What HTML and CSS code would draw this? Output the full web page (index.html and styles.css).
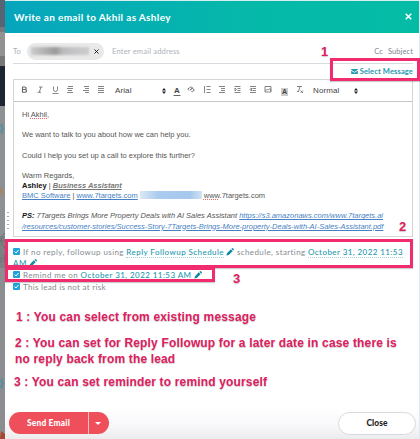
FILE: index.html
```html
<!DOCTYPE html>
<html lang="en">
<head>
<meta charset="utf-8">
<title>Write an email</title>
<link rel="stylesheet" href="styles.css">
</head>
<body>
<svg width="0" height="0" class="defs">
  <symbol id="pencil" viewBox="0 0 10 10"><path d="M.5 9.5l.7-3L6 1.7l2.3 2.3-4.8 4.8zM6.7 1L7.6.2q.5-.3 1 .1l1.1 1.1q.4.5 0 1L9 3.300z"/></symbol>
  <symbol id="sort" viewBox="0 0 4 6"><path d="M0 2.400L2 0l2 2.400zM0 3.600h4L2 6z"/></symbol>
</svg>
<div class="screen">
  <aside class="backdrop">
    <i class="b1"></i><i class="b2"></i><i class="b3"></i><i class="b4"></i><i class="b5"></i><i class="b6"></i><i class="b7"></i><i class="b8"></i>
    <svg class="marks" viewBox="0 0 5 439"><path d="M0 125l4 4M0 132l4-4M2 123v11M0 380l4 4M0 387l4-4M2 378v11" stroke="#458da3" fill="none"/><path d="M1 188v7h2M0 191h3" stroke="#b67f4a" fill="none"/><path d="M5 233q-4 2-4 7t4 8M0 241h5M4.500 255v7M0 258q2-1 2 1.500T0 262" stroke="#666" stroke-width=".7" fill="none"/><path d="M1 431l4 3v5H0z" fill="#a9462f"/></svg>
  </aside>
  <main class="modal">
    <header class="head"><h1>Write an email to Akhil as Ashley</h1><svg class="x" viewBox="0 0 7 7"><path d="M.7.7l5.600 5.600M6.300.7L.7 6.300"/></svg></header>
    <section class="to">
      <span class="lab">To</span>
      <span class="chip"><span class="smudge"></span><svg viewBox="0 0 5 5"><path d="M.5.5l4 4M4.500.5l-4 4"/></svg></span>
      <span class="ph">Enter email address</span>
      <span class="cc">Cc</span><span class="subj">Subject</span>
    </section>
    <div class="select"><svg viewBox="0 0 8 6"><path d="M0 0h8v1L4 3.500 0 1zM0 2l4 2.500L8 2v4H0z"/></svg><span>Select Message</span></div>
    <section class="editor">
      <div class="bar">
        <svg class="tools" viewBox="0 0 400 21" fill="none" stroke="#666" stroke-width=".8">
          <path d="M8.500 7h2.200q1.500 0 1.500 1.200T10.700 9.500H8.500zM8.500 9.500H11q1.600 0 1.600 1.300T11 12.200H8.500z" stroke-width="1.100"/>
          <path d="M25 7h3.500M23.500 12.300H27M27 7l-1.700 5.300"/>
          <path d="M39.500 6.500v3q0 2 2 2t2-2v-3M38.500 13.500h6"/>
          <path d="M54 6.500h5M53 8.500h6M54 10.500h4M53 12.500h6M70 6.500h5M71 8.500h4M69 10.500h6M71 12.500h4M84 6.500h6M84 8.500h6M84 10.500h6M84 12.500h6"/>
          <path d="M159.500 15.500h7M175 8.500l1.500-1.500q1-.5 1.500.5t-1 2l-1 .5M177 9q1.500-1.500 2.500 0t0 2-2 .5M174.500 8q-1 1.500.5 2.500" stroke-width="1"/>
          <path d="M190.500 6v7M192.500 6.500h4M192.500 9.500h4M192.500 12.500h4M205 6.500h6M207 8.500h4M207 10.500h4M205 12.500h6M220.500 6.500h6M223.500 8.500h3M223.500 10.500h3M220.500 12.500h6M221 8v3l1.500-1.500zM236 6.500h6M238.500 8.500h3.500M238.500 10.500h3.500M236 12.500h6M237.500 8v3L236 9.500zM251 6.500h6V12h-6zM251.500 11l2-2 1 1 1.500-1.500 1 2.500"/>
          <path d="M283 6.500h5M286 6.500l-1.500 5M283 11.500h2M286.500 10.500l2.500 2.500M289 10.500L286.500 13"/>
        </svg>
        <span class="font">Arial</span><svg class="sort"><use href="#sort"/></svg><b class="ca">A</b><b class="ba">A</b><span class="norm">Normal</span><svg class="sort"><use href="#sort"/></svg>
      </div>
      <div class="text">
        <p>Hi <u class="sp">Akhil</u>,</p><p></p>
        <p>We want to talk to you about how we can help you.</p><p></p>
        <p>Could I help you set up a call to explore this further?</p><p></p>
        <p>Warm Regards,</p>
        <p><b>Ashley</b> | <em class="role">Business Assistant</em></p>
        <p><a>BMC Software</a> | <a>www.7targets.com</a><span class="blur"></span><span><u class="sp">www</u>.7targets.com</span></p><p></p>
        <p><em><b>PS:</b> 7Targets Brings More Property Deals with AI Sales Assistant <a>https://s3.amazonaws.com/www.7targets.ai</a></em></p>
        <p><em><a>/resources/customer-stories/Success-Story-7Targets-Brings-More-property-Deals-with-AI-Sales-Assistant.pdf</a></em></p>
      </div>
    </section>
    <section class="opts">
      <div class="opt"><i class="ck"><svg viewBox="0 0 7 7"><path d="M1.500 3.500L3 5l2.500-3"/></svg></i><span>If no reply, followup using <a>Reply Followup Schedule</a> <svg class="pen"><use href="#pencil"/></svg> schedule, starting <a>October 31, 2022 11:53</a></span></div>
      <div class="opt"><span><a>AM</a> <svg class="pen"><use href="#pencil"/></svg></span></div>
      <div class="opt"><i class="ck"><svg viewBox="0 0 7 7"><path d="M1.500 3.500L3 5l2.500-3"/></svg></i><span>Remind me on <a>October 31, 2022 11:53 AM</a> <svg class="pen"><use href="#pencil"/></svg></span></div>
      <div class="opt"><i class="ck"><svg viewBox="0 0 7 7"><path d="M1.500 3.500L3 5l2.500-3"/></svg></i><span class="risk">This lead is not at risk</span></div>
    </section>
    <section class="notes">
      <p class="n1">1 : You can select from existing message</p>
      <p class="n2">2 : You can set for Reply Followup for a later date in case there is</p>
      <p class="n3">no reply back from the lead</p>
      <p class="n4">3 : You can set reminder to remind yourself</p>
    </section>
    <footer class="foot">
      <div class="send"><span>Send Email</span><i><svg viewBox="0 0 6 3"><path d="M0 0h6L3 3z"/></svg></i></div>
      <div class="close">Close</div>
    </footer>
  </main>
  <div class="box k1"></div><div class="box k2"></div><div class="box k3"></div>
  <b class="num m1">1</b><b class="num m2">2</b><b class="num m3">3</b>
  <i class="grip"></i>
</div>
</body>
</html>
```
FILE: styles.css
```css
* { box-sizing: border-box; }
body { margin: 0; width: 420px; height: 439px; overflow: hidden; font-family: Lato, sans-serif; color: #858a91; }
h1, p { margin: 0; }
svg { display: block; flex: none; }
.defs { position: absolute; }
.screen { position: relative; display: flex; width: 420px; height: 439px; background: #d8eeee; }
.backdrop { position: relative; width: 5px; height: 439px; display: flex; flex-direction: column; background: #8e9194; }
.backdrop i { display: block; }
.b1 { height: 27px; background: #586474; }
.b2 { height: 5px; background: #77797e; }
.b3 { height: 24px; background: #929292; }
.b4 { height: 10px; background: #777; }
.b5 { height: 40px; background: #1d2534; }
.b6 { height: 130px; background: #8e9194; }
.b7 { height: 32px; background: #7e8183; }
.b8 { height: 171px; background: #8b8d90; }
.marks { position: absolute; left: 0; top: 0; width: 5px; height: 439px; }
.modal { width: 414px; height: 438px; margin-top: 1px; background: #fff; display: flex; flex-direction: column; }
.head { height: 32px; flex: none; display: flex; align-items: center; justify-content: space-between; padding: 0 7px 0 9px; background: linear-gradient(90deg, #06a5bd, #05b9a9 60%, #04bca6); color: #fff; }
h1 { font-size: 10px; font-weight: 700; letter-spacing: .34px; white-space: nowrap; }
.x { width: 7px; height: 7px; margin-top: -1px; fill: none; stroke: #fff; stroke-width: 1.5; }
.to { height: 31px; flex: none; margin: 0 6px 0 8px; padding: 6px 0 0; border-bottom: 1px solid #d9dbe0; display: flex; align-items: center; font-size: 7.5px; white-space: nowrap; color: #aeb2ba; }
.lab { width: 14px; }
.chip { width: 77px; height: 17px; border-radius: 9px; background: #e9e9ea; display: flex; align-items: center; justify-content: space-between; padding: 0 5px 0 4px; margin-right: 8px; }
.smudge { width: 58px; height: 8px; background: linear-gradient(90deg, #cbcbcd, #aaa 30%, #999 42%, #bbb 55%, #c5c5c7 75%, #ccc); filter: blur(1px); }
.chip svg { width: 5px; height: 5px; stroke: #222; stroke-width: 1; }
.ph { flex: 1; letter-spacing: .2px; }
.cc { color: #81868f; margin-right: 5px; }
.subj { color: #81868f; letter-spacing: .1px; }
.select { height: 15px; flex: none; display: flex; justify-content: flex-end; align-items: center; gap: 2px; padding-right: 6px; color: #2599af; font-size: 7.5px; font-weight: 700; letter-spacing: .13px; }
.select svg { width: 7px; height: 5px; fill: #2599af; }
.editor { height: 158px; flex: none; margin: 0 6px 0 8px; border: 1px solid #d5d5d8; font-family: "Liberation Sans", sans-serif; color: #555; }
.bar { position: relative; height: 22px; border-bottom: 1px solid #c5c5c8; display: flex; align-items: center; font-size: 8px; color: #444; padding-left: 101px; }
.tools { position: absolute; left: 0; top: 0; width: 400px; height: 21px; }
.font { width: 47px; letter-spacing: .1px; }
.sort { width: 4px; height: 6px; fill: #222; }
.ca { width: 7px; margin-left: 8px; font-size: 8px; }
.ba { width: 7px; height: 8px; line-height: 8px; margin-left: 100px; margin-top: 3px; background: #ccc; font-size: 7px; text-align: center; }
.norm { margin-left: 25px; width: 41px; letter-spacing: .1px; }
.text { padding: 8px 0 0 8px; font-size: 7.5px; line-height: 10.15px; }
.text p { height: 10.15px; white-space: nowrap; }
a { color: #2599af; }
.text a { color: #477fc3; text-decoration: underline; }
.text b { color: #111; }
.sp { text-decoration: underline dotted #e66; }
.role { font-weight: 700; color: #777; text-decoration: underline; }
.blur { display: inline-block; width: 62px; height: 8px; margin: 0 2px; vertical-align: -1px; background: linear-gradient(90deg, #dce8f5, #a9cbee 30%, #a5c8ed 80%, #d2e2f3); }
.opts { height: 57px; flex: none; padding: 9px 0 0 8px; font-size: 8px; }
.opt { height: 11.6px; display: flex; align-items: center; gap: 3px; white-space: nowrap; letter-spacing: .4px; }
.opt a { border-bottom: 1px dotted #a5d4dd; font-weight: 500; letter-spacing: .43px; }
.risk { letter-spacing: .3px; }
.ck { width: 7px; height: 7px; border-radius: 1px; background: #20a2dd; }
.ck svg { width: 7px; height: 7px; fill: none; stroke: #fff; }
.pen { display: inline-block; width: 8px; height: 8px; fill: #118ba1; vertical-align: -1px; }
.notes { height: 114px; flex: none; padding: 15px 0 0 9px; font-family: "Liberation Sans", sans-serif; font-weight: 700; font-size: 12px; letter-spacing: .16px; color: #df2060; text-shadow: 0 1px 1px #ccc; }
.notes p { height: 16px; line-height: 16px; white-space: nowrap; }
.notes .n1 { margin: 0 0 10px 2px; }
.n2, .n3 { margin-left: 1px; }
.notes .n4 { margin-top: 7px; }
.foot { flex: 1; padding: 4px 3px 0 4px; display: flex; justify-content: space-between; background: linear-gradient(#fff, #f9f9fb 50%, #ececee); font-size: 8.4px; font-weight: 900; }
.send { width: 100px; height: 22px; border-radius: 11px; background: #ef4f5a; color: #fff; display: flex; align-items: center; }
.send span { width: 79px; text-align: center; letter-spacing: .2px; }
.send i { height: 22px; flex: 1; border-left: 1px solid #f9bcc1; display: flex; align-items: center; padding-left: 6px; }
.send svg { width: 6px; height: 3px; fill: #fff; }
.close { width: 78px; height: 23px; border: 1px solid #d8dade; border-radius: 12px; background: #fff; color: #222; text-align: center; line-height: 20px; letter-spacing: .1px; }
.box { position: absolute; border: 3px solid #f02c6e; box-shadow: 0 1px 1px #0003; }
.k1 { left: 330px; top: 58px; width: 90px; height: 23px; }
.k2 { left: 5px; top: 239px; width: 408px; height: 29px; }
.k3 { left: 5px; top: 267px; width: 210px; height: 15px; }
.num { position: absolute; color: #df2060; font: 700 13px/14px "Liberation Sans", sans-serif; text-shadow: 0 1px 1px #ccc; }
.m1 { left: 321px; top: 45px; }
.m2 { left: 399px; top: 220px; }
.m3 { left: 233px; top: 272px; }
.grip { position: absolute; left: 7px; top: 212px; width: 2px; height: 20px; background: repeating-linear-gradient(#aaa 0 1px, transparent 1px 4px); }
```
